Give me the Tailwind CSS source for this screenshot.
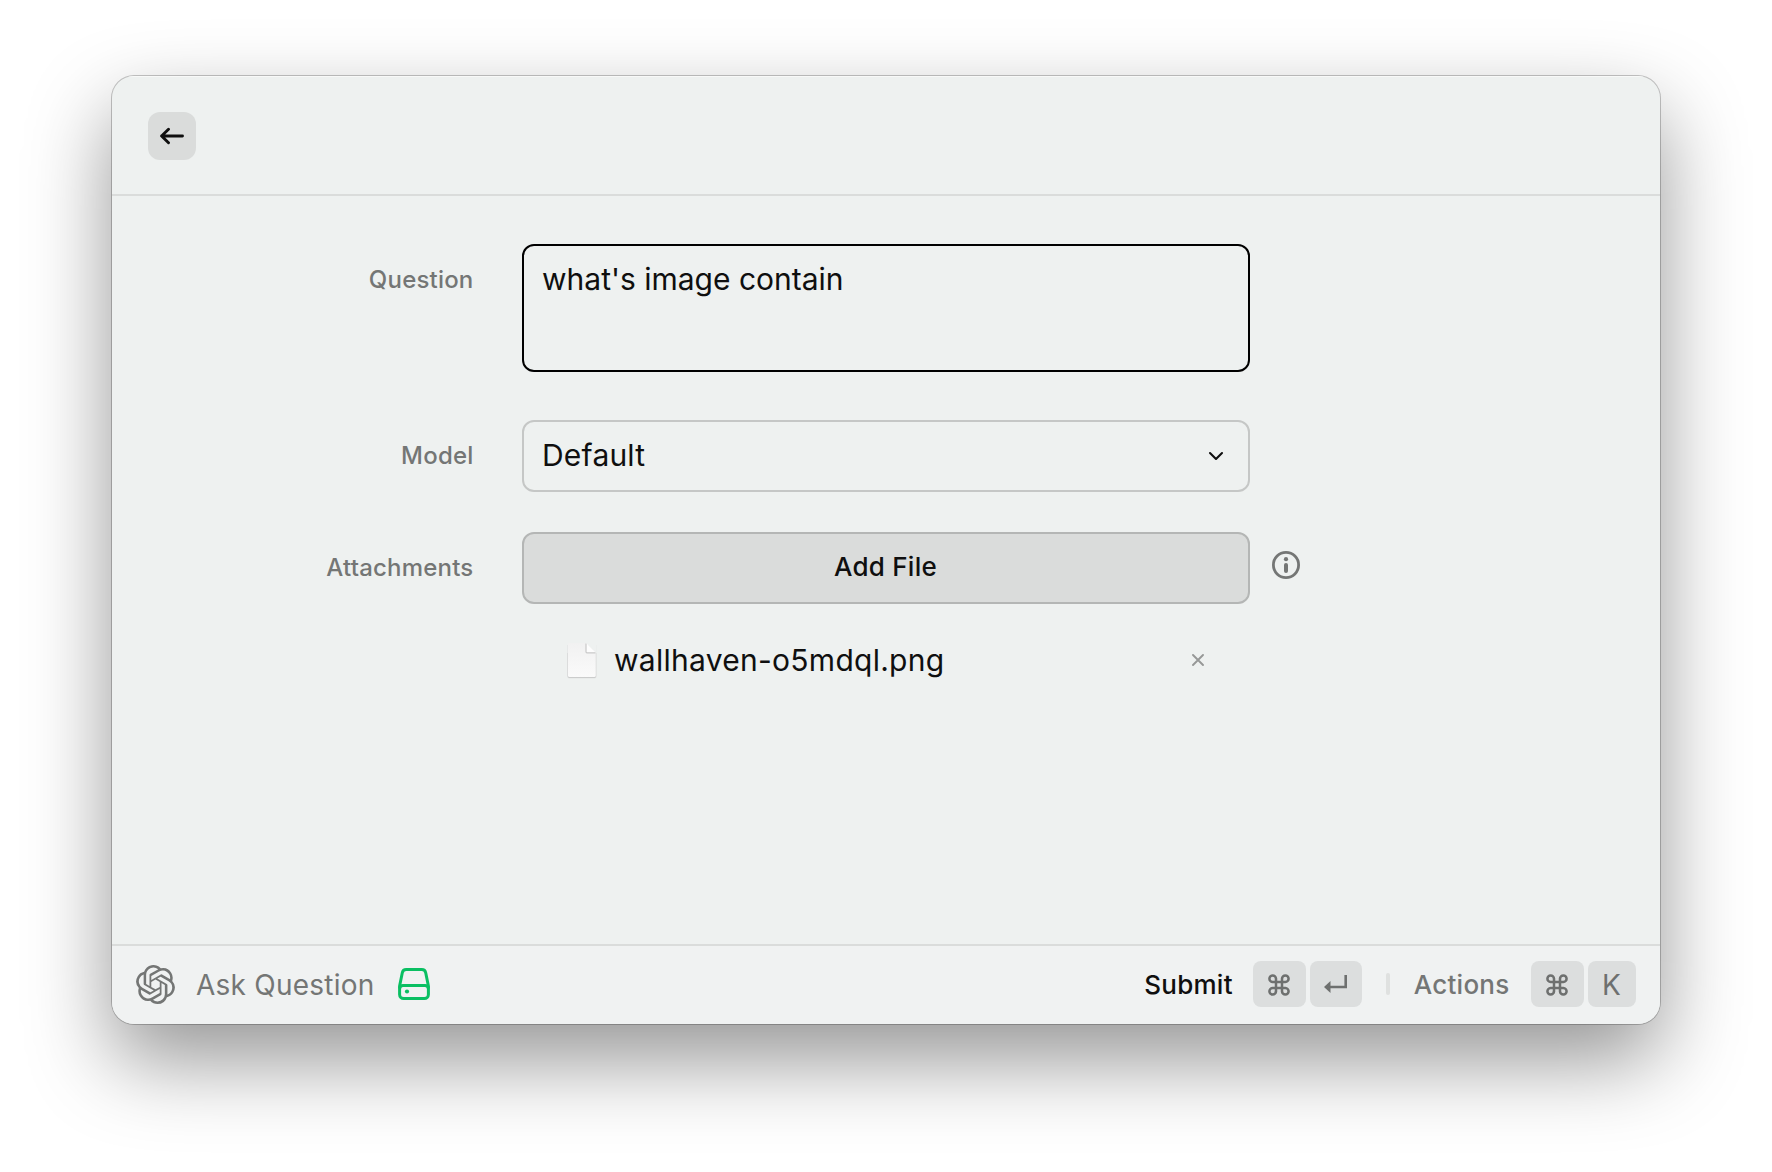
<!DOCTYPE html>
<html lang="en">
<head>
<meta charset="utf-8">
<title>Ask Question</title>
<script src="https://cdn.jsdelivr.net/npm/@tailwindcss/browser@4"></script>
</head>
<body class="flex h-[1172px] w-[1772px] overflow-hidden bg-white px-[112px] pt-[76px] font-['Inter',sans-serif] text-[#0f0f0f]">
<main class="flex h-[948px] w-[1548px] flex-col overflow-hidden rounded-[22px] bg-[#eef1f0] shadow-[0_0_0_1px_rgba(0,0,0,0.22),0_36px_84px_rgba(0,0,0,0.42)]">
  <header class="flex h-[120px] shrink-0 items-center border-b-2 border-[#dadcdb] px-9 pt-[2px] shadow-[inset_0_1px_0_#f8f9f8]">
    <button class="flex size-12 items-center justify-center rounded-xl bg-[#dadcdb]" aria-label="Back">
      <svg class="size-6" viewBox="0 0 24 24" fill="none" stroke="currentColor" stroke-width="2.900" stroke-linecap="round" stroke-linejoin="round"><path d="M22.500 12H1.600M8.500 5.200L1.600 12l6.900 6.800"/></svg>
    </button>
  </header>

  <section class="flex grow flex-col pt-12">
    <div class="flex h-32">
      <label class="w-[361.5px] pt-[18px] text-right text-[24px] leading-9 font-medium tracking-[0.2px] text-[#747675]">Question</label>
      <div class="ml-[48.5px] w-[728px] rounded-xl border-2 border-black px-[18px] pt-[15px] text-[30px] leading-9">what's image contain</div>
    </div>
    <div class="mt-12 flex h-[72px]">
      <label class="w-[361.5px] pt-[18px] text-right text-[24px] leading-9 font-medium tracking-[0.2px] text-[#747675]">Model</label>
      <div class="ml-[48.5px] flex w-[728px] items-center justify-between rounded-xl border-2 border-[#c5c7c6] pr-6 pb-[2px] pl-[18px] text-[30px] leading-9 tracking-[0.2px]">
        <span>Default</span>
        <svg class="mt-[2px] h-[10px] w-4" viewBox="0 0 16 10" fill="none" stroke="currentColor" stroke-width="2.100" stroke-linecap="round" stroke-linejoin="round"><path d="M2 2l6 6 6-6"/></svg>
      </div>
    </div>
    <div class="mt-10 flex h-[72px]">
      <label class="w-[361.5px] pt-[18px] text-right text-[24px] leading-9 font-medium tracking-[0.2px] text-[#747675]">Attachments</label>
      <button class="ml-[48.5px] w-[728px] rounded-xl border-2 border-[#b4b6b5] bg-[#dadcdb] pr-[1px] pb-[2px] text-[26px] leading-9 font-medium tracking-[0.25px]">Add File</button>
      <svg class="mt-[19px] ml-[22px] size-7" viewBox="0 0 28 28" fill="none"><circle cx="14" cy="14" r="12.600" stroke="#747675" stroke-width="2.800"/><circle cx="14" cy="8.200" r="2.100" fill="#747675"/><rect x="12" y="12" width="4" height="10" rx="2" fill="#747675"/></svg>
    </div>
    <div class="mt-[36px] ml-[454px] flex h-10 w-[638px] items-center">
      <svg class="mt-[2px] h-9 w-8" viewBox="0 0 32 36"><defs><linearGradient id="page" x1="0" y1="0" x2="0" y2="1"><stop offset="0" stop-color="#f1f1f1"/><stop offset="1" stop-color="#fafafa"/></linearGradient></defs><path d="M1.300 2h29.200v31.800a1.800 1.800 0 0 1-1.800 1.800H3.100a1.800 1.800 0 0 1-1.800-1.800z" fill="#e3e5e4"/><path d="M1.600 10h28.600v23.300a1.800 1.800 0 0 1-1.800 1.800h-25a1.800 1.800 0 0 1-1.800-1.800z" fill="#cbcccc"/><path d="M30.500 0v10L20 0z" fill="#eef1f0"/><path d="M3.200 0H20l9.800 9.800v22.700a1.500 1.500 0 0 1-1.500 1.500H3.500A1.500 1.500 0 0 1 2 32.500V1.200A1.200 1.200 0 0 1 3.200 0z" fill="url(#page)"/><path d="M20 0l9.800 9.800H21a1 1 0 0 1-1-1z" fill="#fdfdfd"/><path d="M20 .5v8.300a1 1 0 0 0 1 1h8.500" fill="none" stroke="#c9c9c9" stroke-width="1.200"/></svg>
      <span class="ml-4 text-[30px] leading-9 tracking-[0.27px]">wallhaven-o5mdql.png</span>
      <svg class="ml-auto size-3" viewBox="0 0 12 12" stroke="#969897" stroke-width="1.900" stroke-linecap="round"><path d="M1 1l10 10M11 1L1 11"/></svg>
    </div>
  </section>

  <footer class="flex h-20 shrink-0 items-center border-t-2 border-[#dadcdb] bg-[#f0f2f2] pr-6 pb-[2px] pl-6 text-[#747675]">
    <svg class="mr-px size-[39px]" viewBox="0 0 24 24" fill="currentColor"><path d="M22.2819 9.8211a5.9847 5.9847 0 0 0-.5157-4.9108 6.0462 6.0462 0 0 0-6.5098-2.9A6.0651 6.0651 0 0 0 4.9807 4.1818a5.9847 5.9847 0 0 0-3.9977 2.9 6.0462 6.0462 0 0 0 .7427 7.0966 5.98 5.98 0 0 0 .511 4.9107 6.051 6.051 0 0 0 6.5146 2.9001A5.9847 5.9847 0 0 0 13.2599 24a6.0557 6.0557 0 0 0 5.7718-4.2058 5.9894 5.9894 0 0 0 3.9977-2.9001 6.0557 6.0557 0 0 0-.7475-7.0729zm-9.022 12.6081a4.4755 4.4755 0 0 1-2.8764-1.0408l.1419-.0804 4.7783-2.7582a.7948.7948 0 0 0 .3927-.6813v-6.7369l2.02 1.1686a.071.071 0 0 1 .038.052v5.5826a4.504 4.504 0 0 1-4.4945 4.4944zm-9.6607-4.1254a4.4708 4.4708 0 0 1-.5346-3.0137l.142.0852 4.783 2.7582a.7712.7712 0 0 0 .7806 0l5.8428-3.3685v2.3324a.0804.0804 0 0 1-.0332.0615L9.74 19.9502a4.4992 4.4992 0 0 1-6.1408-1.6464zM2.3408 7.8956a4.485 4.485 0 0 1 2.3655-1.9728V11.6a.7664.7664 0 0 0 .3879.6765l5.8144 3.3543-2.0201 1.1685a.0757.0757 0 0 1-.071 0l-4.8303-2.7865A4.504 4.504 0 0 1 2.3408 7.872zm16.5963 3.8558L13.1038 8.364 15.1192 7.2a.0757.0757 0 0 1 .071 0l4.8303 2.7913a4.4944 4.4944 0 0 1-.6765 8.1042v-5.6772a.79.79 0 0 0-.407-.667zm2.0107-3.0231l-.142-.0852-4.7735-2.7818a.7759.7759 0 0 0-.7854 0L9.409 9.2297V6.8974a.0662.0662 0 0 1 .0284-.0615l4.8303-2.7866a4.4992 4.4992 0 0 1 6.6802 4.66zM8.3065 12.863l-2.02-1.1638a.0804.0804 0 0 1-.038-.0567V6.0742a4.4992 4.4992 0 0 1 7.3757-3.4537l-.142.0805L8.704 5.459a.7948.7948 0 0 0-.3927.6813zm1.0976-2.3654l2.602-1.4998 2.6069 1.4998v2.9994l-2.5974 1.4997-2.6067-1.4997Z"/></svg>
    <span class="ml-5 pt-[2px] text-[28px] leading-9 tracking-[0.23px]">Ask Question</span>
    <svg class="ml-6 size-8" viewBox="0 0 32 32" fill="none" stroke="#0abf62" stroke-width="3" stroke-linejoin="round"><path d="M8.200 1.500h15.600a4 4 0 0 1 3.900 3.200l2.700 13.300v8.500a4 4 0 0 1-4 4H5.600a4 4 0 0 1-4-4V18L4.300 4.700a4 4 0 0 1 3.900-3.200z"/><path d="M1.600 20.500a3.400 3.400 0 0 1 3.400-3h22a3.400 3.400 0 0 1 3.400 3"/><circle cx="9" cy="23.500" r="2.100" fill="#0abf62" stroke="none"/></svg>
    <div class="ml-auto flex items-center">
      <span class="pt-[2px] text-[26px] leading-9 font-medium tracking-[0.25px] text-[#0f0f0f]">Submit</span>
      <kbd class="ml-[20.5px] flex h-[46px] w-[53px] items-center justify-center rounded-lg bg-[#dcdede] pr-[1px] text-[#6e706f]"><svg class="mt-[2px] size-[22px]" viewBox="0 0 22 22" fill="none" stroke="currentColor" stroke-width="2.500"><path d="M8 8h6v6H8zM8 8H4.600A3.300 3.300 0 1 1 8 4.600zM14 8V4.600A3.300 3.300 0 1 1 17.400 8zM14 14h3.400a3.300 3.300 0 1 1-3.400 3.400zM8 14v3.400A3.300 3.300 0 1 1 4.600 14z"/></svg></kbd>
      <kbd class="ml-1 flex h-[46px] w-[52px] items-center justify-center rounded-lg bg-[#dcdede] pr-[1px] text-[#6e706f]"><svg class="h-[18px] w-[23px]" viewBox="0 0 23 18"><path d="M21.700 0v12H5" fill="none" stroke="currentColor" stroke-width="2.600"/><path d="M0 12l6.500-6v12z" fill="currentColor"/></svg></kbd>
      <span class="ml-6 h-[22px] w-1 rounded-full bg-[#dfe1e0]"></span>
      <span class="ml-[23.5px] pt-[2px] text-[26px] leading-9 font-medium tracking-[0.25px]">Actions</span>
      <kbd class="ml-[21.5px] flex h-[46px] w-[53px] items-center justify-center rounded-lg bg-[#dcdede] pr-[1px] text-[#6e706f]"><svg class="mt-[2px] size-[22px]" viewBox="0 0 22 22" fill="none" stroke="currentColor" stroke-width="2.500"><path d="M8 8h6v6H8zM8 8H4.600A3.300 3.300 0 1 1 8 4.600zM14 8V4.600A3.300 3.300 0 1 1 17.400 8zM14 14h3.400a3.300 3.300 0 1 1-3.400 3.400zM8 14v3.400A3.300 3.300 0 1 1 4.600 14z"/></svg></kbd>
      <kbd class="ml-1 flex h-[46px] w-12 items-center justify-center rounded-lg bg-[#dcdede] pt-[2px] pr-[1px] font-['Inter',sans-serif] text-[28px] leading-9 text-[#6e706f]">K</kbd>
    </div>
  </footer>
</main>
</body>
</html>
